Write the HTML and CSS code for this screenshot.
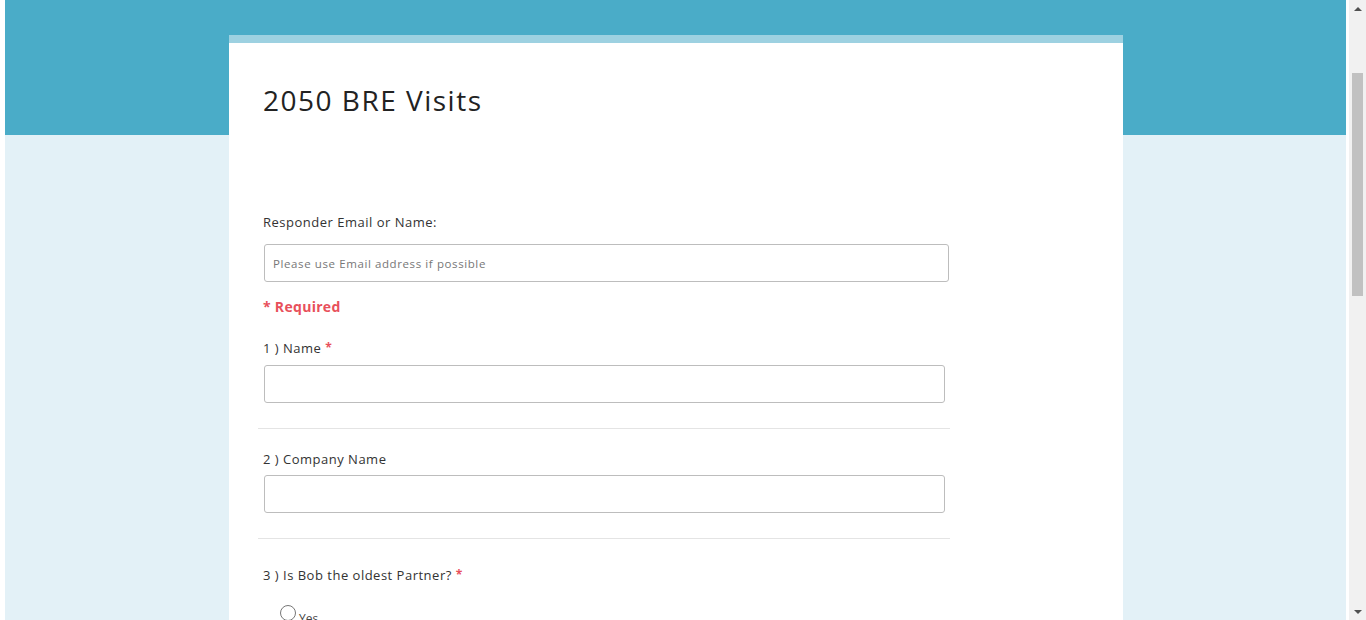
FILE: index.html
```html
<!DOCTYPE html>
<html lang="en">
<head>
<meta charset="utf-8">
<title>2050 BRE Visits</title>
<link rel="stylesheet" href="styles.css">
</head>
<body>
<div class="page">
  <div class="viewport">
    <div class="card">
      <h1 class="title">2050 BRE Visits</h1>
      <div class="responder">
        <label class="label">Responder Email or Name:</label>
        <input class="input input-wide" type="text" placeholder="Please use Email address if possible">
      </div>
      <div class="required-note">* Required</div>
      <div class="question first">
        <label class="label">1 ) Name <span class="star">*</span></label>
        <input class="input" type="text">
      </div>
      <div class="question">
        <label class="label">2 ) Company Name</label>
        <input class="input" type="text">
      </div>
      <div class="question last">
        <label class="label">3 ) Is Bob the oldest Partner? <span class="star">*</span></label>
        <div class="option"><span class="radio"></span><span class="opt-text">Yes</span></div>
      </div>
    </div>
  </div>
  <div class="scrollbar">
    <div class="arrow up"></div>
    <div class="track"><div class="thumb"></div></div>
    <div class="arrow down"></div>
  </div>
</div>
</body>
</html>
```
FILE: styles.css
```css
html, body {
  margin: 0;
  padding: 0;
  height: 620px;
  overflow: hidden;
  background: #fff;
  font-family: "Open Sans", "Liberation Sans", sans-serif;
}
.page {
  display: flex;
  height: 620px;
}
.viewport {
  flex: 1;
  margin: 0 3px 0 5px;
  padding-left: 1px;
  background: linear-gradient(#4aacc8 0, #4aacc8 135px, #e3f1f7 135px);
  overflow: hidden;
}
.card {
  width: 894px;
  box-sizing: border-box;
  margin: 35px auto 0;
  border-top: 8px solid #9dd1e1;
  background: #fff;
  padding: 0 34px 0 34px;
  min-height: 700px;
}
.title {
  margin: 0;
  padding-top: 40px;
  font-size: 28px;
  line-height: 34px;
  font-weight: 500;
  letter-spacing: 1.5px;
  color: #222;
}
.responder {
  margin-top: 96px;
  display: flex;
  flex-direction: column;
}
.label {
  display: block;
  font-size: 13px;
  line-height: 18px;
  letter-spacing: 0.5px;
  color: #333;
}
.star {
  color: #e8505b;
  font-weight: 700;
  font-size: 12px;
  vertical-align: 1px;
}
.input {
  display: block;
  box-sizing: border-box;
  width: 681px;
  height: 38px;
  margin: 7px 0 0 1px;
  border: 1px solid #bdbdbd;
  border-radius: 3px;
  background: #fff;
  padding: 0 8px;
  font-family: inherit;
  font-size: 11.5px;
  letter-spacing: 0.6px;
}
.question.first .input { margin-top: 8px; }
.input-wide { width: 685px; margin-top: 13px; }
.input::placeholder { color: #777; }
.required-note {
  margin-top: 16px;
  font-size: 14px;
  line-height: 18px;
  font-weight: 700;
  letter-spacing: 0.3px;
  color: #e8505b;
}
.question {
  margin: 0 -5px 0 -5px;
  padding: 21px 5px 25px;
  border-bottom: 1px solid #e4e4e4;
  width: 682px;
}
.question.first { padding-top: 23px; }
.question.last { border-bottom: none; padding-top: 27px; }
.option {
  display: flex;
  align-items: flex-end;
  margin: 20px 0 0 17px;
}
.radio {
  width: 16px;
  height: 16px;
  border: 1px solid #777;
  border-radius: 50%;
  box-sizing: border-box;
}
.opt-text {
  font-size: 12px;
  color: #444;
  margin-left: 3px;
  transform: translateY(6px);
}
.scrollbar {
  width: 17px;
  background: #f1f1f1;
  display: flex;
  flex-direction: column;
}
.arrow {
  height: 17px;
  display: flex;
  align-items: center;
  justify-content: center;
}
.arrow.up::before {
  content: "";
  border-left: 4px solid transparent;
  border-right: 4px solid transparent;
  border-bottom: 4px solid #505050;
}
.arrow.down::before {
  content: "";
  border-left: 4px solid transparent;
  border-right: 4px solid transparent;
  border-top: 4px solid #505050;
}
.track {
  flex: 1;
  padding-top: 56px;
  display: flex;
  justify-content: center;
}
.thumb {
  width: 11px;
  height: 223px;
  background: #c1c1c1;
}
```
